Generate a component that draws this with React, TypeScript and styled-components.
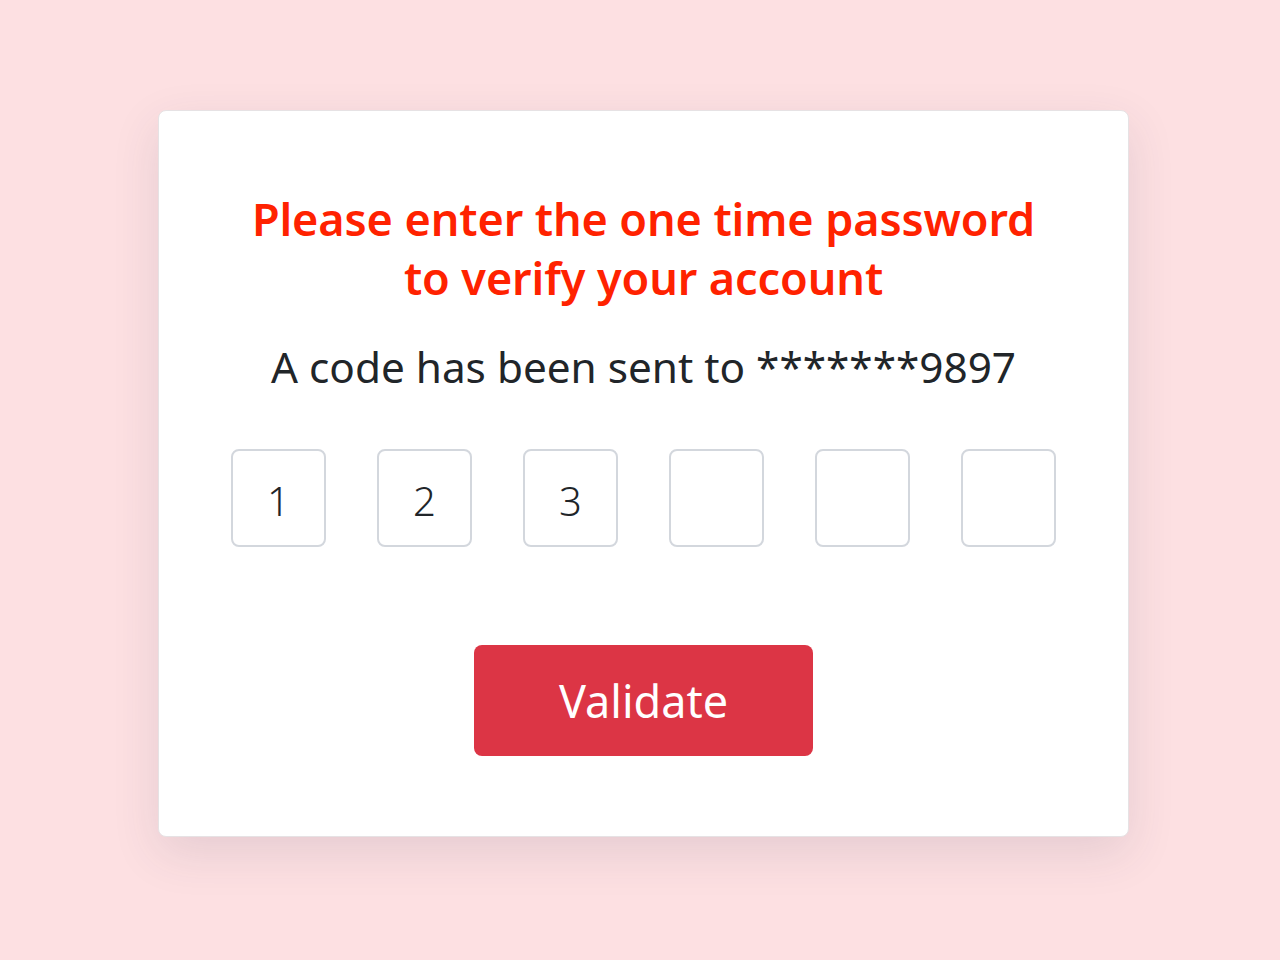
import styled, { createGlobalStyle } from "styled-components";

const GlobalStyle = createGlobalStyle`
  html, body {
    margin: 0;
    padding: 0;
    background: #fde0e2;
    font-family: "Noto Sans", "Open Sans", sans-serif;
  }
`;

const digits = ["1", "2", "3", "", "", ""];

const App = () => {
  return (
    <Page>
      <GlobalStyle />
      <Card>
        <Title>
          Please enter the one time password
          <br />
          to verify your account
        </Title>
        <Subtitle>A code has been sent to *******9897</Subtitle>
        <CodeRow>
          {digits.map((d, i) => (
            <CodeBox key={i} type="text" maxLength={1} defaultValue={d} />
          ))}
        </CodeRow>
        <ValidateButton>Validate</ValidateButton>
      </Card>
    </Page>
  );
};

const Page = styled.div`
  min-height: 960px;
  display: flex;
  justify-content: center;
  align-items: flex-start;
  padding: 110px 0 0 7px;
  box-sizing: border-box;
`;

const Card = styled.div`
  width: 971px;
  height: 727px;
  box-sizing: border-box;
  background: #fff;
  border-radius: 8px;
  border: 1px solid #e6e2e4;
  box-shadow: 0 16px 48px rgba(60, 60, 90, 0.12);
  display: flex;
  flex-direction: column;
  align-items: center;
  padding-top: 78px;
`;

const Title = styled.h1`
  margin: 0;
  text-align: center;
  color: #ff2200;
  font-size: 45px;
  font-weight: 600;
  line-height: 59px;
  letter-spacing: -0.1px;
`;

const Subtitle = styled.p`
  margin: 30px 0 0;
  color: #212529;
  font-size: 42.3px;
  line-height: 60px;
`;

const CodeRow = styled.div`
  display: flex;
  gap: 51px;
  margin-top: 52px;
`;

const CodeBox = styled.input`
  width: 95px;
  height: 98px;
  box-sizing: border-box;
  border: 2px solid #d3d7dd;
  border-radius: 8px;
  padding-top: 6px;
  text-align: center;
  font-family: inherit;
  font-size: 40px;
  font-weight: 300;
  color: #212529;
  outline: none;
`;

const ValidateButton = styled.button`
  margin-top: 98px;
  width: 339px;
  height: 111px;
  border: none;
  border-radius: 8px;
  background: #dc3545;
  color: #fff;
  font-family: inherit;
  font-size: 45px;
  cursor: pointer;
`;

export default App;
